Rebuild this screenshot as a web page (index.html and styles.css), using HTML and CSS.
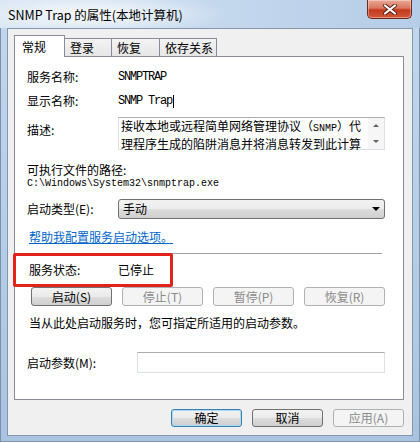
FILE: index.html
```html
<!DOCTYPE html>
<html>
<head>
  <title>SNMP Trap 的属性(本地计算机)</title>
  <link rel="stylesheet" href="styles.css">
</head>
<body>
  <div class="window">
    <div class="titlebar">
      <span class="title">SNMP Trap 的属性(本地计算机)</span>
      <div class="close">
        <svg width="16" height="11" viewBox="0 0 16 11">
          <path d="M3 1.5 L13 9.5 M13 1.5 L3 9.5" stroke="#5a2016" stroke-width="4" stroke-linecap="round"/>
          <path d="M3 1.5 L13 9.5 M13 1.5 L3 9.5" stroke="#ffffff" stroke-width="2.2" stroke-linecap="round"/>
        </svg>
      </div>
    </div>

    <div class="client">
      <div class="tabs">
        <div class="tab active">常规</div>
        <div class="tab tab-2">登录</div>
        <div class="tab tab-3">恢复</div>
        <div class="tab tab-4">依存关系</div>
      </div>

      <div class="panel">
        <div class="row row-name">
          <span class="label">服务名称:</span>
          <span class="mono">SNMPTRAP</span>
        </div>

        <div class="row row-display">
          <span class="label">显示名称:</span>
          <span class="mono">SNMP Trap</span><span class="caret"></span>
        </div>

        <div class="row row-desc">
          <span class="label label-top">描述:</span>
          <div class="textbox desc">
            <div class="desc-text">
              <div>接收本地或远程简单网络管理协议（<span class="mono-small">SNMP</span>）代</div>
              <div>理程序生成的陷阱消息并将消息转发到此计算</div>
            </div>
            <div class="scrollbar">
              <span class="arrow-up"></span>
              <span class="arrow-down"></span>
            </div>
          </div>
        </div>

        <div class="row-path-label">可执行文件的路径:</div>
        <div class="path">C:\Windows\System32\snmptrap.exe</div>

        <div class="row row-startup">
          <span class="label">启动类型(E):</span>
          <div class="combo">
            <span>手动</span>
            <span class="combo-arrow"></span>
          </div>
        </div>

        <div class="row-link"><a href="#">帮助我配置服务启动选项。</a></div>

        <div class="separator"></div>

        <div class="row row-status">
          <span class="label">服务状态:</span>
          <span>已停止</span>
        </div>

        <div class="service-buttons">
          <button class="btn">启动(S)</button>
          <button class="btn" disabled>停止(T)</button>
          <button class="btn" disabled>暂停(P)</button>
          <button class="btn" disabled>恢复(R)</button>
        </div>

        <div class="row-hint">当从此处启动服务时，您可指定所适用的启动参数。</div>

        <div class="row row-params">
          <span class="label label-wide">启动参数(M):</span>
          <div class="textbox params"></div>
        </div>

        <div class="highlight"></div>
      </div>

      <div class="dialog-buttons">
        <button class="btn btn-dialog default">确定</button>
        <button class="btn btn-dialog">取消</button>
        <button class="btn btn-dialog" disabled>应用(A)</button>
      </div>
    </div>
  </div>
</body>
</html>
```

FILE: styles.css
```css
body {
  margin: 0;
  font-family: "Noto Sans CJK SC", "Noto Sans", sans-serif;
  font-size: 12px;
  color: #000;
  background: #fff;
}

.window {
  width: 420px;
  height: 442px;
  box-sizing: border-box;
  display: flex;
  flex-direction: column;
  background: linear-gradient(to bottom, #c3d7ed 0%, #b4cce6 60%, #a9c3e0 100%);
  box-shadow: inset 0 0 0 1px #7a90a8;
}

/* title bar */
.titlebar {
  height: 28px;
  display: flex;
  align-items: flex-start;
  padding-left: 8px;
  background: radial-gradient(ellipse 140px 22px at 90px 14px, rgba(255,255,255,0.85), rgba(255,255,255,0) 100%),
              linear-gradient(to right, #d6e4f3 0%, #c6d9ee 45%, #b6cde8 100%);
}

.title {
  margin-top: 7px;
  line-height: 16px;
  font-size: 12.5px;
  color: #000;
}

.close {
  margin-left: auto;
  margin-right: 8px;
  width: 45px;
  height: 19px;
  box-sizing: border-box;
  border: 1px solid #6b2a1c;
  border-top: none;
  border-radius: 0 0 5px 5px;
  background: linear-gradient(to bottom, #e9a895 0%, #d9785f 45%, #c4391d 55%, #d4593a 100%);
  display: flex;
  align-items: center;
  justify-content: center;
  box-shadow: inset 0 0 0 1px rgba(255,255,255,0.35);
}

/* client area */
.client {
  flex: 1;
  margin: 0 7px 6px 7px;
  border: 1px solid #8497ad;
  background: #f0f0f0;
  padding: 6px 8px 0 6px;
  display: flex;
  flex-direction: column;
}

.tabs {
  display: flex;
  align-items: flex-end;
  height: 21px;
  position: relative;
  z-index: 1;
}

.tab {
  height: 18px;
  box-sizing: border-box;
  border: 1px solid #898c95;
  border-bottom: none;
  margin-left: -1px;
  padding-left: 5px;
  line-height: 17px;
  background: linear-gradient(to bottom, #f4f4f4, #e6e6e6);
}

.tab.active {
  height: 22px;
  margin-left: 0;
  margin-bottom: -1px;
  width: 51px;
  padding-left: 7px;
  line-height: 22px;
  background: #fff;
}

.tab-2 { width: 48px; }
.tab-3 { width: 49px; }
.tab-4 { width: 58px; }

.panel {
  height: 344px;
  box-sizing: border-box;
  border: 1px solid #898c95;
  background: #fff;
  padding: 0 18px 0 12px;
  position: relative;
}

.row {
  display: flex;
  align-items: center;
  line-height: 16px;
}

.label {
  width: 91px;
  flex-shrink: 0;
}

.label-wide {
  width: 110px;
}

.label-top {
  padding-top: 5px;
}

.mono {
  font-family: "Liberation Mono", monospace;
  font-size: 12px;
  letter-spacing: -1.2px;
}

.mono-small {
  font-family: "Liberation Mono", monospace;
  font-size: 10px;
}

.caret {
  display: inline-block;
  width: 1px;
  height: 13px;
  margin-left: 1px;
  background: #000;
}

.row-name { margin-top: 12px; }
.row-display { margin-top: 8px; }

.row-desc {
  margin-top: 8px;
  align-items: flex-start;
}

.textbox {
  box-sizing: border-box;
  border: 1px solid #dbdfe6;
  border-top-color: #abadb3;
  background: #fff;
}

.desc {
  width: 267px;
  height: 33px;
  display: flex;
}

.desc-text {
  flex: 1;
  padding-left: 2px;
  line-height: 15px;
  white-space: nowrap;
}

.scrollbar {
  width: 16px;
  flex-shrink: 0;
  background: #f6f6f6;
  display: flex;
  flex-direction: column;
  justify-content: space-around;
  align-items: center;
}

.arrow-up,
.arrow-down {
  width: 0;
  height: 0;
  border-left: 3px solid transparent;
  border-right: 3px solid transparent;
}

.arrow-up { border-bottom: 3px solid #606060; }
.arrow-down { border-top: 3px solid #606060; }

.row-path-label {
  margin-top: 12px;
  line-height: 16px;
}

.path {
  font-family: "Liberation Mono", monospace;
  font-size: 10px;
  line-height: 12px;
}

.row-startup {
  margin-top: 9px;
  height: 20px;
}

.combo {
  width: 267px;
  height: 20px;
  box-sizing: border-box;
  border: 1px solid #707070;
  border-radius: 3px;
  background: linear-gradient(to bottom, #f2f2f2 0%, #ebebeb 50%, #dddddd 51%, #cfcfcf 100%);
  display: flex;
  align-items: center;
  justify-content: space-between;
  padding: 0 4px 0 4px;
}

.combo-arrow {
  width: 0;
  height: 0;
  border-left: 4px solid transparent;
  border-right: 4px solid transparent;
  border-top: 4px solid #000;
}

.row-link {
  margin-top: 10px;
  line-height: 16px;
  padding-left: 2px;
}

.row-link a {
  color: #0066cc;
}

.separator {
  margin: 8px 3px 0 0;
  height: 1px;
  background: #a0a0a0;
  border-bottom: 1px solid #fff;
}

.row-status {
  margin-top: 7px;
  padding-left: 2px;
}

.row-status .label {
  width: 89px;
}

.service-buttons {
  margin: 9px 0 0 4px;
  display: flex;
  justify-content: space-between;
}

.btn {
  width: 81px;
  height: 19px;
  box-sizing: border-box;
  padding: 0;
  border: 1px solid #707070;
  border-radius: 3px;
  background: linear-gradient(to bottom, #f2f2f2 0%, #ebebeb 50%, #dddddd 51%, #cfcfcf 100%);
  font-family: "Noto Sans CJK SC", "Noto Sans", sans-serif;
  font-size: 12px;
  line-height: 16px;
  color: #000;
}

.btn:disabled {
  border-color: #adb2b5;
  background: #f4f4f4;
  color: #8a8a8a;
}

.row-hint {
  margin-top: 9px;
  line-height: 16px;
  padding-left: 2px;
}

.row-params {
  margin-top: 21px;
}

.params {
  width: 248px;
  height: 21px;
}

/* red annotation box */
.highlight {
  position: absolute;
  left: -2px;
  top: 196px;
  width: 160px;
  height: 34px;
  box-sizing: border-box;
  border: 3px solid #e3221b;
  border-radius: 2px;
}

.dialog-buttons {
  margin-top: 9px;
  display: flex;
  justify-content: flex-end;
  gap: 10px;
}

.btn-dialog {
  width: 71px;
  height: 18px;
}

.btn-dialog.default {
  border-color: #3c7fb1;
  box-shadow: inset 0 0 0 1px #a9dbf6;
}
```
